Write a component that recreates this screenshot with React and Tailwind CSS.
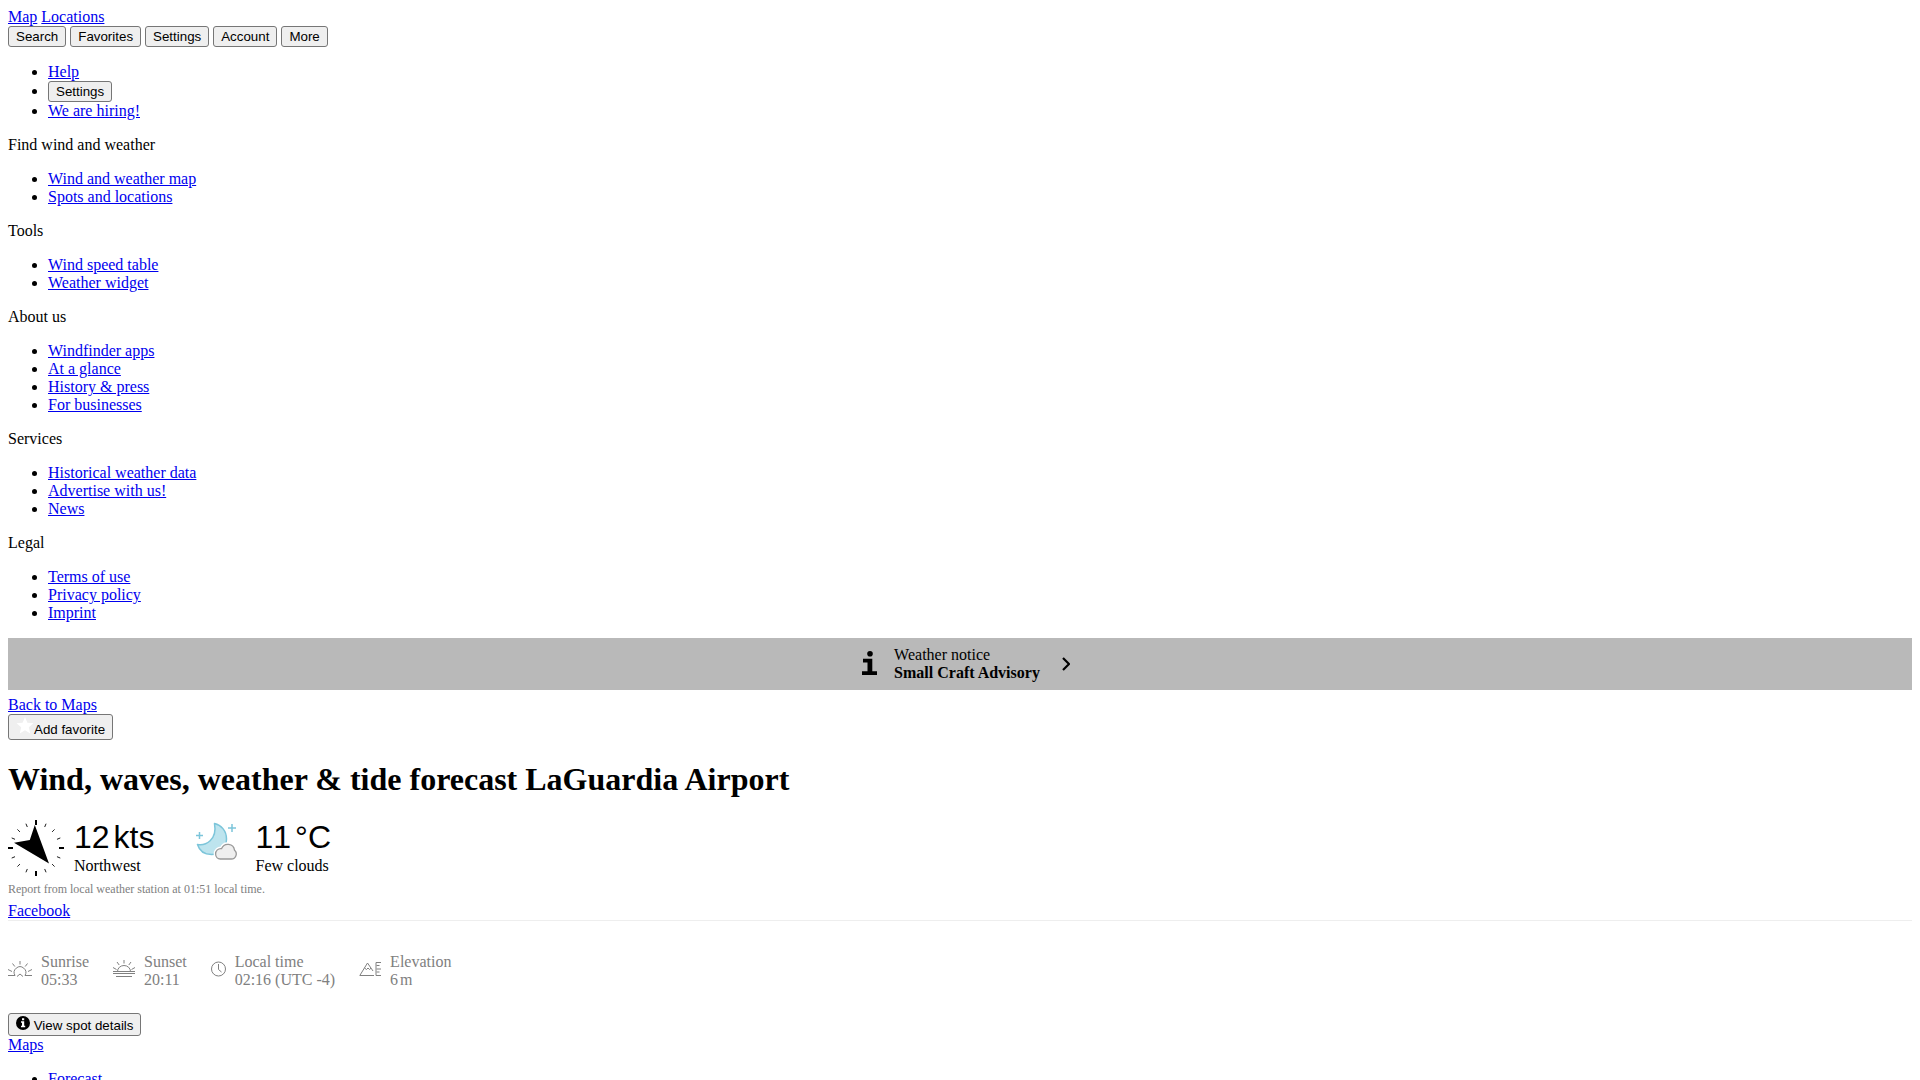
const linkClass = "text-[#0000ee] underline";

function Link({ children }) {
  return (
    <a href="#" className={linkClass}>
      {children}
    </a>
  );
}

function Button({ children }) {
  return (
    <button
      type="button"
      className="rounded-[3px] border border-[#767676] bg-[#efefef] px-[7px] py-[2px] text-black [font:revert]"
    >
      {children}
    </button>
  );
}

function List({ children }) {
  return <ul className="my-4 list-disc pl-10">{children}</ul>;
}

const sections = [
  { title: "Find wind and weather", links: ["Wind and weather map", "Spots and locations"] },
  { title: "Tools", links: ["Wind speed table", "Weather widget"] },
  { title: "About us", links: ["Windfinder apps", "At a glance", "History & press", "For businesses"] },
  { title: "Services", links: ["Historical weather data", "Advertise with us!", "News"] },
  { title: "Legal", links: ["Terms of use", "Privacy policy", "Imprint"] },
];

function InfoIcon() {
  return (
    <svg className="mb-0.5" width="16" height="24" viewBox="0 0 16 24" aria-hidden="true">
      <circle cx="8" cy="2.8" r="2.8" />
      <path d="M1 7.700h9.300v12.500H15V24H0v-3.800h5.500v-8.700H1z" />
    </svg>
  );
}

function ChevronIcon() {
  return (
    <svg width="8" height="14" viewBox="0 0 8 14" fill="none" stroke="#000" strokeWidth="2.2" aria-hidden="true">
      <path d="M1 1l6 6-6 6" />
    </svg>
  );
}

function StarIcon() {
  return (
    <svg className="inline-block align-baseline" width="18" height="17" viewBox="0 0 18 17" fill="#fff" aria-hidden="true">
      <path d="M9 0l2.400 5.800 6.100.5-4.700 4 1.500 6.200L9 13.200l-5.300 3.300 1.500-6.200-4.700-4 6.100-.5z" />
    </svg>
  );
}

function SpotIcon() {
  return (
    <svg className="inline-block align-baseline" width="14" height="14" viewBox="0 0 14 14" aria-hidden="true">
      <circle cx="7" cy="7" r="7" />
      <path fill="#fff" d="M6 2.300h2.200v1.900H6zM5 5.300h3.200v4.500h1v1.500H5V9.800h1v-3H5z" />
    </svg>
  );
}

function Compass() {
  const minor = [22.5, 45, 67.5, 112.5, 135, 157.5, 202.5, 225, 247.5, 292.5, 315, 337.5];
  return (
    <svg width="56" height="56" viewBox="0 0 56 56" aria-hidden="true">
      {[0, 90, 180, 270].map((a) => (
        <path key={a} d="M28 0v5" stroke="#000" strokeWidth="2" transform={`rotate(${a} 28 28)`} />
      ))}
      {minor.map((a) => (
        <path key={a} d="M28 1.700v3.600" stroke="#000" strokeWidth="0.800" transform={`rotate(${a} 28 28)`} />
      ))}
      <path d="M26.800 5L41 43.500 6 22.700 21.800 20z" />
    </svg>
  );
}

function MoonCloud() {
  const cloud =
    "M25.300 37h11a5 5 0 0 0 3.200-8.800 6.700 6.700 0 0 0-12.900-1.600 5.200 5.200 0 0 0-6 5.400 5 5 0 0 0 4.700 5z";
  return (
    <svg className="mr-[6px] mb-3 ml-px" width="44" height="40" viewBox="0 0 44 40" fill="none" aria-hidden="true">
      <path
        d="M19.500 1.500C26 3 31.500 8.500 31.500 17c0 9-7 15.500-15 15.500-6.500 0-12-3.500-14-10 8 1.500 20-4.500 17-21z"
        fill="#bde4ee"
        stroke="#7cc5da"
        strokeWidth="1.500"
        strokeLinejoin="round"
      />
      <path d="M37 2v8M33 6h8M4.500 10v7M1 13.500h7" stroke="#7cc5da" strokeWidth="1.500" />
      <path d={cloud} stroke="#fff" strokeWidth="4" />
      <path d={cloud} fill="#efefef" stroke="#999" strokeWidth="1.300" />
    </svg>
  );
}

function SunriseIcon() {
  return (
    <svg className="mb-1" width="24" height="16" viewBox="0 0 24 16" fill="none" stroke="#808080" aria-hidden="true">
      <path d="M0 14.500h7a5.800 5.800 0 1 1 10 0h7M9 15.500l3-2.500 3 2.500M12 0v3.500M4.500 2.500l2.300 3M19.500 2.500l-2.300 3M0 8.500l4 2M24 8.500l-4 2" />
    </svg>
  );
}

function SunsetIcon() {
  return (
    <svg className="mb-1" width="22" height="18" viewBox="1 0 22 18" fill="none" stroke="#808080" aria-hidden="true">
      <path d="M5.500 11.500a6.500 6 0 0 1 13 0M12 0v3.500M5 2l2.200 3M19 2l-2.200 3M1 7.500l3.500 2M23 7.500l-3.500 2M0 11.500h24M1 13.500h22M4 16.500h16" />
    </svg>
  );
}

function ClockIcon() {
  return (
    <svg className="mb-1" width="15" height="16" viewBox="0 0 15 16" fill="none" stroke="#808080" aria-hidden="true">
      <circle cx="7.500" cy="8" r="7" />
      <path d="M7.500 3v5.500l3 2.500" />
    </svg>
  );
}

function ElevationIcon() {
  return (
    <svg className="mb-1" width="22" height="16" viewBox="0 0 22 16" fill="none" stroke="#808080" aria-hidden="true">
      <path d="M15 14.500H.8L8.500 2l5.500 8M5.500 7l2 1.500L9 7l1.500 1.500L12 7.200M22 1.500h-5v13h5M17.500 4.500h3M17.500 8h4.500M17.500 11h3" />
    </svg>
  );
}

function Reading({ icon, value, unit, label }) {
  return (
    <div className="flex items-center">
      {icon}
      <div className="ml-[10px]">
        <div className="mb-1 font-['Liberation_Sans',Arial,sans-serif] text-[32px] leading-8 [font-kerning:none]">
          {value}
          <span className="ml-1">{unit}</span>
        </div>
        <div>{label}</div>
      </div>
    </div>
  );
}

function Fact({ icon, label, children }) {
  return (
    <div className="flex items-center gap-[9px]">
      {icon}
      <div>
        <div>{label}</div>
        <div>{children}</div>
      </div>
    </div>
  );
}

export default function App() {
  return (
    <div className="h-screen overflow-hidden bg-white p-2 font-['Liberation_Serif','Times_New_Roman',serif] text-base leading-[18px] text-black">
      <header>
        <div>
          <Link>Map</Link> <Link>Locations</Link>
        </div>
        <div className="flex gap-1">
          <Button>Search</Button>
          <Button>Favorites</Button>
          <Button>Settings</Button>
          <Button>Account</Button>
          <Button>More</Button>
        </div>
        <nav>
          <List>
            <li>
              <Link>Help</Link>
            </li>
            <li>
              <Button>Settings</Button>
            </li>
            <li>
              <Link>We are hiring!</Link>
            </li>
          </List>
          {sections.map((section) => (
            <section key={section.title}>
              <div>{section.title}</div>
              <List>
                {section.links.map((label) => (
                  <li key={label}>
                    <Link>{label}</Link>
                  </li>
                ))}
              </List>
            </section>
          ))}
        </nav>
      </header>

      <a href="#" className="mb-[6px] flex items-center justify-center bg-[#b9b9b9] py-2 pl-3 text-black">
        <InfoIcon />
        <div className="mr-[22px] ml-4">
          <div>Weather notice</div>
          <div className="font-bold">Small Craft Advisory</div>
        </div>
        <ChevronIcon />
      </a>

      <main>
        <div>
          <Link>Back to Maps</Link>
        </div>
        <div className="flex">
          <Button>
            <StarIcon />
            Add favorite
          </Button>
        </div>
        <h1 className="mt-[21px] mb-[22px] text-[32px] leading-[37px] font-bold">
          Wind, waves, weather &amp; tide forecast LaGuardia Airport
        </h1>
        <div className="flex gap-10">
          <Reading icon={<Compass />} value="12" unit="kts" label="Northwest" />
          <Reading icon={<MoonCloud />} value="11" unit="°C" label="Few clouds" />
        </div>
        <p className="my-[6px] text-xs leading-[14px] text-[#808080]">
          Report from local weather station at 01:51 local time.
        </p>
        <div className="border-b border-[#eeeeee]">
          <Link>Facebook</Link>
        </div>
        <div className="mt-8 mb-6 flex gap-6 text-[#808080]">
          <Fact icon={<SunriseIcon />} label="Sunrise">05:33</Fact>
          <Fact icon={<SunsetIcon />} label="Sunset">20:11</Fact>
          <Fact icon={<ClockIcon />} label="Local time">02:16 (UTC -4)</Fact>
          <Fact icon={<ElevationIcon />} label="Elevation">
            6<span className="ml-[2px]">m</span>
          </Fact>
        </div>
        <div className="flex">
          <Button>
            <SpotIcon /> View spot details
          </Button>
        </div>
        <div>
          <Link>Maps</Link>
        </div>
        <List>
          <li>
            <Link>Forecast</Link>
          </li>
        </List>
      </main>
    </div>
  );
}
